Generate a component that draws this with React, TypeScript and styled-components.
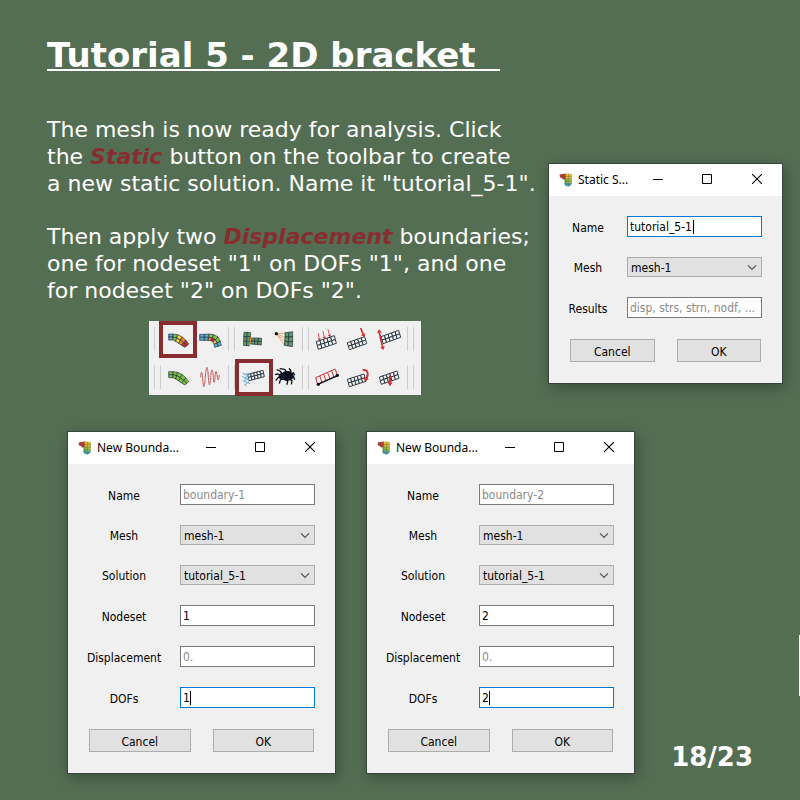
import React, { useId } from "react";
import styled, { createGlobalStyle } from "styled-components";

const GlobalStyle = createGlobalStyle`
  * { box-sizing: border-box; }
  body {
    margin: 0;
    background: #546e53;
    color: #fff;
    font-family: "DejaVu Sans", sans-serif;
  }
`;

/* ---------- slide layout ---------- */

const Slide = styled.main`
  position: relative;
  min-height: 100vh;
  padding: 35px 17px 26px 47px;
  display: flex;
  flex-direction: column;
  overflow: hidden;
`;

const Title = styled.h1`
  margin: 0;
  font-size: 34px;
  line-height: 40px;
  font-weight: 700;
`;

const TitleText = styled.span`
  display: inline-block;
  height: 36px;
  padding-right: 24px;
  border-bottom: 2px solid #fff;
`;

const TopRow = styled.section`
  display: grid;
  grid-template-columns: minmax(0, 1fr) 235px;
  margin-top: 41px;
`;

const Intro = styled.div`
  font-size: 22px;
  line-height: 27px;
  white-space: nowrap;

  p {
    margin: 0 0 26px;
  }
`;

const Term = styled.em`
  font-weight: 700;
  font-style: italic;
  color: #872d2f;
`;

const StaticSlot = styled.div`
  padding-top: 47px;
`;

const BottomRow = styled.section`
  display: flex;
  align-items: flex-end;
  gap: 30px;
  margin: 36px 0 0 20px;
`;

const PageNumber = styled.p`
  flex: 1;
  margin: 0 30px 0 0;
  text-align: right;
  white-space: nowrap;
  font-size: 26px;
  line-height: 34px;
  font-weight: 700;
`;

const NextMarker = styled.div`
  position: absolute;
  right: 0;
  top: 635px;
  width: 1px;
  height: 61px;
  background: #fff;
`;

/* ---------- dialogs ---------- */

const Window = styled.section<{ $width: number }>`
  width: ${(p) => p.$width}px;
  flex: none;
  background: #f0f0f0;
  color: #000;
  border: 1px solid #38453a;
  box-shadow: 2px 4px 14px rgba(0, 0, 0, 0.3);
  font-family: "DejaVu Sans Condensed", "Noto Sans", sans-serif;
  font-size: 12px;
  line-height: 16px;
`;

const TitleBar = styled.header`
  display: flex;
  align-items: center;
  height: 32px;
  padding-left: 10px;
  background: #fff;
`;

const WindowTitle = styled.h2`
  flex: 1;
  margin: 0 0 0 5px;
  font-family: "Noto Sans", sans-serif;
  font-size: 12px;
  line-height: 32px;
  font-weight: 400;
  white-space: nowrap;
`;

const WindowButton = styled.button`
  display: grid;
  place-items: center;
  width: 50px;
  height: 30px;
  flex: none;
  padding: 0;
  border: 0;
  background: transparent;
`;

const WindowControls = styled.div`
  display: flex;
  flex: none;
  align-self: flex-start;
  width: 150px;
  margin-left: -20px;
`;

const Form = styled.form`
  display: flex;
  flex-direction: column;
  gap: 20px;
  padding: 20px 20px 21px;
`;

const FormRow = styled.div`
  display: grid;
  grid-template-columns: minmax(0, 1fr) 135px;
  column-gap: 20px;
  align-items: center;
`;

const Label = styled.label`
  justify-self: center;
  padding-top: 2px;
  white-space: nowrap;
`;

const FieldBox = styled.div`
  position: relative;
  display: flex;
`;

const TextInput = styled.input<{ $active?: boolean }>`
  width: 100%;
  height: 21px;
  padding: 1px 2px 0;
  border: 1px solid ${(p) => (p.$active ? "#0078d7" : "#7a7a7a")};
  border-radius: 0;
  outline: none;
  background: #fff;
  color: #000;
  font: inherit;
  text-overflow: ellipsis;

  &::placeholder {
    color: #8a8a8a;
    opacity: 1;
  }
`;

const Caret = styled.span<{ $left: number }>`
  position: absolute;
  left: ${(p) => p.$left}px;
  top: 4px;
  width: 1px;
  height: 14px;
  background: #000;
`;

const Select = styled.select`
  appearance: none;
  width: 100%;
  height: 20px;
  padding: 1px 20px 0 3px;
  border: 1px solid #adadad;
  border-radius: 0;
  background: #e1e1e1;
  color: #000;
  font: inherit;
`;

const Chevron = styled.svg`
  position: absolute;
  right: 5px;
  top: 7px;
  pointer-events: none;
`;

const Actions = styled.div`
  display: grid;
  grid-template-columns: 1fr 1fr;
  column-gap: 22px;
  margin: 1px 1px 0;
`;

const ActionButton = styled.button`
  height: 23px;
  padding: 2px 0 0;
  border: 1px solid #adadad;
  background: #e1e1e1;
  color: #000;
  font: inherit;
`;

interface Field {
  label: string;
  kind: "text" | "select";
  value?: string;
  placeholder?: string;
  caret?: number;
}

function AppIcon() {
  return (
    <svg width="14" height="14" viewBox="0 0 28 28" aria-hidden="true">
      <path d="M1 3 L14 1 V12 L8 13 L6 10 L2 9Z" fill="#c0393b" />
      <path d="M13 1 L25 2 V14 H13Z" fill="#dfb92f" />
      <path d="M11 12 H19 V22 H11Z" fill="#7eb54a" />
      <path d="M18 12 H25 V22 H18Z" fill="#a9c145" />
      <path d="M11 20 H25 Q24 27 18 27 Q11 26 11 20Z" fill="#4aa0b4" />
      <path
        d="M2 7H25M8 12H25M11 17H25M11 22H25M7 2V12M13 1V25M19 1V27M25 2V22"
        stroke="#41503a"
        strokeOpacity="0.5"
        strokeWidth="1.2"
        fill="none"
      />
    </svg>
  );
}

function Dialog({ title, width, fields }: { title: string; width: number; fields: Field[] }) {
  const id = useId();
  return (
    <Window $width={width} aria-label={title}>
      <TitleBar>
        <AppIcon />
        <WindowTitle>{title}</WindowTitle>
        <WindowControls>
          <WindowButton type="button" aria-label="Minimize">
            <svg width="12" height="11"><path d="M2 5.5H12" stroke="#000" /></svg>
          </WindowButton>
          <WindowButton type="button" aria-label="Maximize">
            <svg width="10" height="10"><path d="M.5 .5H9.5V9.5H.5Z" stroke="#000" fill="none" /></svg>
          </WindowButton>
          <WindowButton type="button" aria-label="Close">
            <svg width="10" height="10"><path d="M0 0L10 10M10 0L0 10" stroke="#000" strokeWidth="1.1" /></svg>
          </WindowButton>
        </WindowControls>
      </TitleBar>
      <Form onSubmit={(e) => e.preventDefault()}>
        {fields.map((f) => {
          const fieldId = id + f.label;
          return (
            <FormRow key={f.label}>
              <Label htmlFor={fieldId}>{f.label}</Label>
              <FieldBox>
                {f.kind === "select" ? (
                  <>
                    <Select id={fieldId} defaultValue={f.value}>
                      <option>{f.value}</option>
                    </Select>
                    <Chevron width="10" height="7" viewBox="0 0 10 7">
                      <path d="M1 1.3L5 5.3L9 1.3" fill="none" stroke="#505050" strokeWidth="1.2" />
                    </Chevron>
                  </>
                ) : (
                  <TextInput
                    id={fieldId}
                    type="text"
                    defaultValue={f.value}
                    placeholder={f.placeholder}
                    $active={f.caret !== undefined}
                  />
                )}
                {f.caret !== undefined && <Caret $left={f.caret} />}
              </FieldBox>
            </FormRow>
          );
        })}
        <Actions>
          <ActionButton type="button">Cancel</ActionButton>
          <ActionButton type="submit">OK</ActionButton>
        </Actions>
      </Form>
    </Window>
  );
}

/* ---------- toolbar ---------- */

const Toolbar = styled.div`
  display: flex;
  flex-direction: column;
  gap: 14px;
  width: 272px;
  margin: -9px 0 0 102px;
  padding: 6px 7px 6px 5px;
  background: #f0f0f0;
`;

const ToolRow = styled.div`
  display: flex;
`;

const Separator = styled.span`
  width: 7px;
  height: 24px;
  flex: none;
  border: solid #cdcdcd;
  border-width: 0 1px;
`;

const ToolGroup = styled.div<{ $lead: number; $width: number }>`
  display: flex;
  flex: none;
  width: ${(p) => p.$width}px;
  padding-left: ${(p) => p.$lead}px;
`;

const ToolButton = styled.button<{ $marked?: boolean }>`
  position: relative;
  width: 32px;
  height: 24px;
  flex: none;
  padding: 0;
  border: 0;
  background: transparent;

  svg {
    display: block;
    overflow: visible;
  }

  &::after {
    content: "";
    display: ${(p) => (p.$marked ? "block" : "none")};
    position: absolute;
    z-index: 1;
    inset: -6px -3px -7px;
    border: 4px solid #872d2f;
  }
`;

type Pt = [number, number];

const INK = "#22303c";

/* Quad mesh: rows of points, one fill per quad. */
function Mesh({ rows, fills, line = INK, width = 2 }: { rows: Pt[][]; fills: string[][]; line?: string; width?: number }) {
  const quads: React.ReactNode[] = [];
  for (let r = 0; r + 1 < rows.length; r++) {
    for (let c = 0; c + 1 < rows[r].length; c++) {
      const pts = [rows[r][c], rows[r][c + 1], rows[r + 1][c + 1], rows[r + 1][c]];
      const row = fills[r % fills.length];
      quads.push(
        <polygon key={r + "-" + c} points={pts.join(" ")} fill={row[c % row.length]} stroke={line} strokeWidth={width} strokeLinejoin="round" />
      );
    }
  }
  return <g>{quads}</g>;
}

/* Regular slanted mesh spanned by two vectors. */
function SlantMesh({ at, u, v, nu, nv, fill = "#f4f4f4", width = 2.8 }: { at: Pt; u: Pt; v: Pt; nu: number; nv: number; fill?: string; width?: number }) {
  const rows: Pt[][] = [];
  for (let j = 0; j <= nv; j++) {
    const row: Pt[] = [];
    for (let i = 0; i <= nu; i++) {
      row.push([at[0] + (u[0] * i) / nu + (v[0] * j) / nv, at[1] + (u[1] * i) / nu + (v[1] * j) / nv]);
    }
    rows.push(row);
  }
  return <Mesh rows={rows} fills={[[fill]]} width={width} />;
}

function Arrow({ from, to, head = 6, width = 3 }: { from: Pt; to: Pt; head?: number; width?: number }) {
  const len = Math.hypot(to[0] - from[0], to[1] - from[1]);
  const d: Pt = [(to[0] - from[0]) / len, (to[1] - from[1]) / len];
  const base: Pt = [to[0] - d[0] * head * 1.5, to[1] - d[1] * head * 1.5];
  const left: Pt = [base[0] - d[1] * head, base[1] + d[0] * head];
  const right: Pt = [base[0] + d[1] * head, base[1] - d[0] * head];
  return (
    <g>
      <path d={`M${from} L${base}`} stroke="#cf2e32" strokeWidth={width} />
      <polygon points={[to, left, right].join(" ")} fill="#cf2e32" />
    </g>
  );
}

const BLUE = "#5aa9d0";
const GREEN = "#80c443";
const YELLOW = "#efcf32";
const ORANGE = "#ee8430";
const RED = "#c92f30";
const SAGE = "#5f9a66";

const beam: Pt[][] = [
  [[71, 57], [84, 57], [98, 59], [112, 66], [123, 76], [131, 87]],
  [[71, 66], [84, 66], [95, 69], [106, 75], [116, 83], [126, 92]],
  [[71, 75], [83, 75], [92, 79], [101, 85], [110, 91], [119, 97]],
];

interface Tool {
  name: string;
  box: string;
  marked?: boolean;
  art: React.ReactNode;
}

const groupSizes = [
  { lead: 1, width: 67 },
  { lead: 3, width: 67 },
  { lead: 1, width: 98 },
];

const topTools: Tool[][] = [
  [
    {
      name: "Static",
      box: "51 36 96 72",
      marked: true,
      art: <Mesh rows={beam} fills={[[BLUE, GREEN, YELLOW, ORANGE, RED]]} />,
    },
    {
      name: "Static plastic",
      box: "147 36 96 72",
      art: (
        <Mesh
          rows={[
            [[164, 58], [178, 58], [192, 57], [206, 59], [219, 66], [226, 79], [229, 91]],
            [[164, 67], [178, 67], [191, 67], [202, 69], [211, 74], [216, 84], [219, 94]],
            [[164, 76], [178, 76], [189, 76], [197, 77], [204, 80], [207, 88], [209, 97]],
          ]}
          fills={[[BLUE, BLUE, GREEN, GREEN, GREEN, BLUE], [BLUE, BLUE, ORANGE, RED, YELLOW, BLUE]]}
        />
      ),
    },
  ],
  [
    {
      name: "Touch",
      box: "24 36 96 72",
      art: (
        <g>
          <Mesh rows={[[[42, 52], [52, 52], [62, 53]], [[41, 65], [51, 65], [61, 66]], [[41, 78], [50, 79], [60, 80]], [[40, 91], [50, 92], [58, 93]]]} fills={[[SAGE]]} />
          <Mesh rows={[[[64, 69], [74, 69], [85, 69], [95, 70]], [[63, 78], [74, 79], [84, 79], [94, 80]], [[62, 87], [73, 88], [84, 89], [94, 90]]]} fills={[[SAGE]]} />
          <path d="M63 66L58 91" stroke="#ec7d33" strokeWidth="4" />
        </g>
      ),
    },
    {
      name: "Point coupling",
      box: "120 36 96 72",
      art: (
        <g>
          <path d="M139 56L165 54M139 56L164 67M139 56L165 80M139 56L164 92" stroke="#f0a064" strokeWidth="2.6" />
          <Mesh rows={[[[165, 53], [176, 52], [188, 50]], [[165, 66], [176, 66], [188, 65]], [[164, 79], [175, 80], [188, 80]], [[163, 91], [175, 93], [187, 95]]]} fills={[[SAGE]]} />
          <circle cx="139" cy="56" r="5" fill="#07101a" />
        </g>
      ),
    },
  ],
  [
    {
      name: "Pressure",
      box: "15 36 96 72",
      art: (
        <g>
          <SlantMesh at={[34, 80]} u={[54, -18]} v={[6, 23]} nu={5} nv={2} />
          <Arrow from={[40, 55]} to={[44, 78]} width={2.4} head={5} />
          <Arrow from={[54, 49]} to={[59, 73]} width={2.4} head={5} />
          <Arrow from={[69, 43]} to={[75, 67]} width={2.4} head={5} />
        </g>
      ),
    },
    {
      name: "Concentrated load",
      box: "111 36 96 72",
      art: (
        <g>
          <SlantMesh at={[127, 83]} u={[52, -18]} v={[6, 21]} nu={5} nv={2} />
          <Arrow from={[167, 39]} to={[178, 67]} width={5} head={7} />
        </g>
      ),
    },
    {
      name: "Line load",
      box: "207 36 96 72",
      art: (
        <g>
          <SlantMesh at={[228, 65]} u={[53, -19]} v={[6, 21]} nu={5} nv={2} />
          <Arrow from={[228, 75]} to={[221, 43]} width={5} head={7} />
          <Arrow from={[226, 68]} to={[235, 105]} width={5} head={7} />
        </g>
      ),
    },
  ],
];

const bottomTools: Tool[][] = [
  [
    {
      name: "Eigenmodes",
      box: "51 150 96 72",
      art: <Mesh rows={beam.map((row) => row.map(([x, y]): Pt => [x, y + 113]))} fills={[[GREEN]]} />,
    },
    {
      name: "Dynamic",
      box: "147 150 96 72",
      art: (
        <path
          d="M167 187C168 165 171 168 173 187C175 224 178 224 181 187C184 147 188 147 190 187C192 217 195 217 197 187C199 157 203 157 205 187C206 207 209 207 210 187C211 164 215 164 217 187C218 198 221 198 223 180"
          fill="none"
          stroke="#c95b5d"
          strokeWidth="3"
        />
      ),
    },
  ],
  [
    {
      name: "Displacement",
      box: "24 150 96 72",
      marked: true,
      art: (
        <g>
          <SlantMesh at={[53, 178]} u={[46, -12]} v={[4, 19]} nu={5} nv={2} />
          <path d="M38 174L57 184M36 184L57 195M38 197L60 206M42 207L49 213M52 174L42 181M55 182L43 190M56 190L42 198M58 198L46 209" stroke="#72add3" strokeWidth="3" />
        </g>
      ),
    },
    {
      name: "Debug",
      box: "120 150 96 72",
      art: (
        <g fill="none" stroke="#07111d" strokeWidth="4" strokeLinejoin="round">
          <path d="M160 180L150 168L140 164M158 184L144 177L135 179M158 187L145 187L137 197M160 190L151 195L148 206M174 178L164 163L149 161M178 178L183 168L177 160M180 181L190 173L194 181M180 185L191 185L194 194M176 190L186 197L184 208M169 190L173 201L170 209" />
          <ellipse cx="172" cy="183" rx="17" ry="13" fill="#07111d" />
          <circle cx="156" cy="184" r="8" fill="#07111d" />
        </g>
      ),
    },
  ],
  [
    {
      name: "Distributed line load",
      box: "15 150 96 72",
      art: (
        <g>
          <path d="M32 188L90 162L98 181L38 208Z M44 183L51 202M56 178L63 197M68 173L75 192M80 167L87 187" fill="none" stroke="#cf3437" strokeWidth="3" />
          <path d="M38 208L98 182" stroke="#07101a" strokeWidth="4" />
          <circle cx="40" cy="208" r="5" fill="#07101a" />
          <circle cx="97" cy="181" r="5" fill="#07101a" />
        </g>
      ),
    },
    {
      name: "Torque",
      box: "111 150 96 72",
      art: (
        <g>
          <SlantMesh at={[127, 193]} u={[50, -16]} v={[6, 22]} nu={5} nv={2} />
          <path d="M173 165Q190 163 188 180Q187 187 182 194" fill="none" stroke="#cf2e32" strokeWidth="6" />
          <polygon points="175,188 192,192 180,199" fill="#cf2e32" />
        </g>
      ),
    },
    {
      name: "Gravity",
      box: "207 150 96 72",
      art: (
        <g>
          <SlantMesh at={[223, 186]} u={[53, -18]} v={[6, 22]} nu={5} nv={2} />
          <Arrow from={[255, 181]} to={[255, 214]} width={6} head={8} />
        </g>
      ),
    },
  ],
];

function Tools({ groups }: { groups: Tool[][] }) {
  return (
    <ToolRow>
      <Separator />
      {groups.map((tools, i) => (
        <React.Fragment key={i}>
          <ToolGroup $lead={groupSizes[i].lead} $width={groupSizes[i].width}>
            {tools.map((t) => (
              <ToolButton key={t.name} type="button" aria-label={t.name} $marked={t.marked}>
                <svg width="32" height="24" viewBox={t.box}>{t.art}</svg>
              </ToolButton>
            ))}
          </ToolGroup>
          <Separator />
        </React.Fragment>
      ))}
    </ToolRow>
  );
}

/* ---------- content ---------- */

const staticFields: Field[] = [
  { label: "Name", kind: "text", value: "tutorial_5-1", caret: 66 },
  { label: "Mesh", kind: "select", value: "mesh-1" },
  { label: "Results", kind: "text", placeholder: "disp, strs, strn, nodf, ..." },
];

const boundaryFields = (n: string): Field[] => [
  { label: "Name", kind: "text", placeholder: "boundary-" + n },
  { label: "Mesh", kind: "select", value: "mesh-1" },
  { label: "Solution", kind: "select", value: "tutorial_5-1" },
  { label: "Nodeset", kind: "text", value: n },
  { label: "Displacement", kind: "text", placeholder: "0." },
  { label: "DOFs", kind: "text", value: n, caret: 10 },
];

export default function App() {
  return (
    <>
      <GlobalStyle />
      <Slide>
        <Title>
          <TitleText>Tutorial 5 - 2D bracket</TitleText>
        </Title>
        <TopRow>
          <div>
            <Intro>
              <p>
                The mesh is now ready for analysis. Click
                <br />
                the <Term>Static</Term> button on the toolbar to create
                <br />
                a new static solution. Name it "tutorial_5-1".
              </p>
              <p>
                Then apply two <Term>Displacement</Term> boundaries;
                <br />
                one for nodeset "1" on DOFs "1", and one
                <br />
                for nodeset "2" on DOFs "2".
              </p>
            </Intro>
            <Toolbar role="toolbar" aria-label="Analysis tools">
              <Tools groups={topTools} />
              <Tools groups={bottomTools} />
            </Toolbar>
          </div>
          <StaticSlot>
            <Dialog title="Static S..." width={235} fields={staticFields} />
          </StaticSlot>
        </TopRow>
        <BottomRow>
          <Dialog title="New Bounda..." width={269} fields={boundaryFields("1")} />
          <Dialog title="New Bounda..." width={269} fields={boundaryFields("2")} />
          <PageNumber>18/23</PageNumber>
        </BottomRow>
        <NextMarker />
      </Slide>
    </>
  );
}
